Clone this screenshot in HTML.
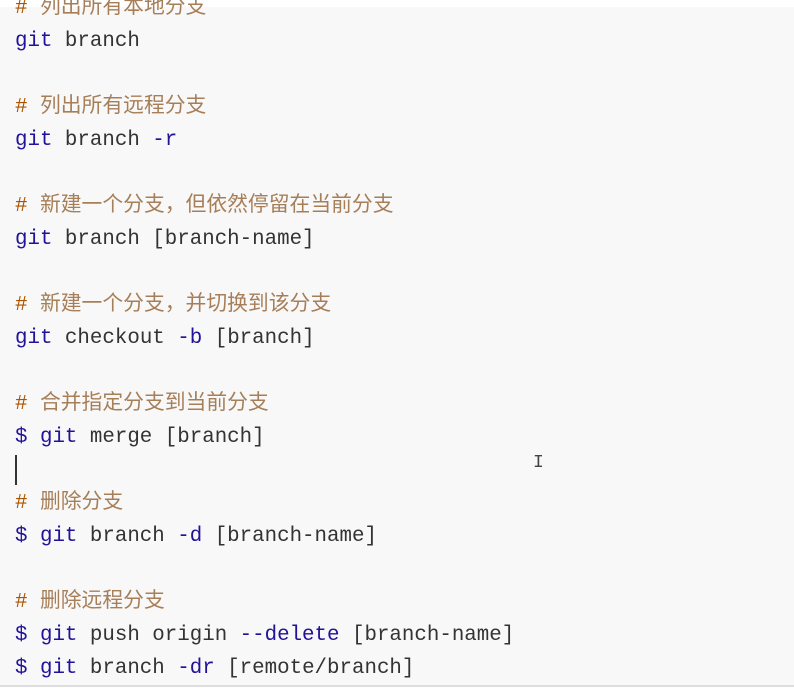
<!DOCTYPE html><html><head><meta charset="utf-8"><style>
body{margin:0;width:794px;height:688px;overflow:hidden;background:#fff;position:relative}
.box{position:absolute;left:0;top:7px;width:794px;height:678px;background:#f8f8f8;border-bottom:2px solid #ddd}
pre{position:absolute;left:15px;top:-8px;margin:0;font:20.8px/33px "Liberation Mono","Noto Sans CJK SC",monospace;color:#333}
.k{color:#221199}.c{color:#a67f59}.h{color:#aa5500}
.cur{position:absolute;left:15px;top:455px;width:1.5px;height:30px;background:#333}
.ib{position:absolute;left:533px;top:453px;font:18px "Liberation Mono",monospace;color:#444}
</style></head><body><div class="box"></div>
<pre><span class="h">#</span> <span class="c">列出所有本地分支</span>
<span class="k">git</span> branch

<span class="h">#</span> <span class="c">列出所有远程分支</span>
<span class="k">git</span> branch <span class="k">-r</span>

<span class="h">#</span> <span class="c">新建一个分支，但依然停留在当前分支</span>
<span class="k">git</span> branch [branch-name]

<span class="h">#</span> <span class="c">新建一个分支，并切换到该分支</span>
<span class="k">git</span> checkout <span class="k">-b</span> [branch]

<span class="h">#</span> <span class="c">合并指定分支到当前分支</span>
<span class="k">$ git</span> merge [branch]

<span class="h">#</span> <span class="c">删除分支</span>
<span class="k">$ git</span> branch <span class="k">-d</span> [branch-name]

<span class="h">#</span> <span class="c">删除远程分支</span>
<span class="k">$ git</span> push origin <span class="k">--delete</span> [branch-name]
<span class="k">$ git</span> branch <span class="k">-dr</span> [remote/branch]</pre>
<div class="cur"></div><div class="ib">I</div>
</body></html>
